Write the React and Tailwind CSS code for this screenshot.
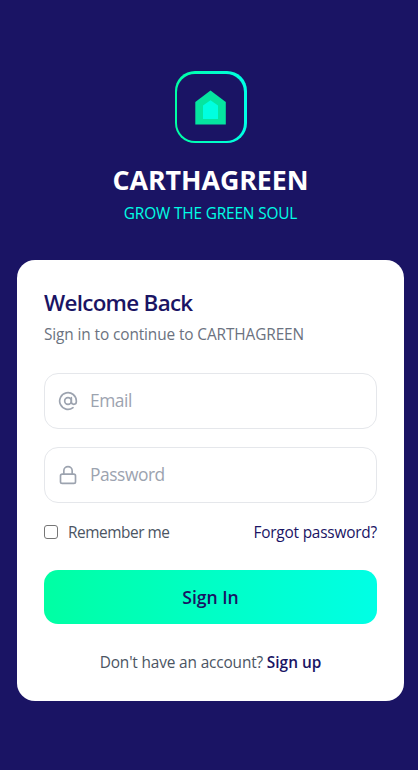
import { AtSign, Lock } from "lucide-react";

function Logo() {
  return (
    <div className="h-[72px] w-[72px] rounded-[20px] bg-linear-to-r from-[#00ffa3] to-[#00ffe5] pt-[3px] pr-[3px] pb-[2px] pl-[2px]">
      <div className="flex h-full w-full items-center justify-center rounded-[18px] bg-[#1a1464]">
        <svg width="67" height="67" viewBox="0 0 67 67">
          <path d="M33.5 16.6 48.8 28v22.6H18.3V28Z" fill="#05e5a0" />
          <path d="M33.5 26.2 41 31.6V45H26V31.6Z" fill="#00ffe0" />
        </svg>
      </div>
    </div>
  );
}

function Field({ icon: Icon, type, label }) {
  return (
    <label className="flex h-14 items-center gap-3 rounded-[14px] border border-[#e5e7eb] pl-[13px]">
      <Icon size={20} className="shrink-0 text-[#9ca3af]" />
      <input
        type={type}
        placeholder={label}
        className="min-w-0 flex-1 bg-transparent pb-px text-[17.4px] tracking-[-0.45px] outline-none placeholder:text-[#9ca3af]"
      />
    </label>
  );
}

export default function App() {
  return (
    <div className="flex min-h-[770px] flex-col items-center bg-[#1a1464] pt-[71px] pr-[14px] pl-[17px] font-['Open_Sans','Noto_Sans',sans-serif]">
      <Logo />
      <h1 className="mt-[19px] text-[26.8px] leading-9 font-bold tracking-[-0.08px] whitespace-nowrap text-white">CARTHAGREEN</h1>
      <p className="mt-[4px] text-[15.4px] leading-6 tracking-[-0.15px] whitespace-nowrap text-[#00ffe5]">GROW THE GREEN SOUL</p>
      <main className="mt-[34px] h-[441px] w-full rounded-[18px] bg-white px-[27px] pt-[27px]">
        <h2 className="text-[22.4px] leading-8 font-semibold tracking-[-0.7px] text-[#1a1464]">Welcome Back</h2>
        <p className="mt-[4px] text-[15.4px] leading-6 tracking-[-0.11px] text-[#6b7280]">Sign in to continue to CARTHAGREEN</p>
        <div className="mt-[26px] flex flex-col gap-[18px]">
          <Field icon={AtSign} type="email" label="Email" />
          <Field icon={Lock} type="password" label="Password" />
        </div>
        <div className="mt-[18px] flex h-6 items-center justify-between text-[15.4px] tracking-[-0.2px]">
          <label className="flex items-center tracking-[-0.45px] text-[#4b5563]">
            <input type="checkbox" className="mr-[10px] mb-[2px] h-[14px] w-[14px] appearance-none rounded-[3px] border border-[#767676] bg-white" />
            <span>Remember me</span>
          </label>
          <a href="#" className="text-[#1a1464]">Forgot password?</a>
        </div>
        <button className="mt-[25px] flex h-[54px] w-full items-center justify-center rounded-[14px] bg-linear-to-r from-[#00ffa3] to-[#00ffe5] text-[17.6px] font-semibold tracking-[-0.02px] text-[#1a1464]">
          Sign In
        </button>
        <p className="mt-[27px] text-center text-[15.4px] leading-6 tracking-[-0.15px] text-[#4b5563]">
          Don't have an account? <a href="#" className="font-semibold tracking-normal text-[#1a1464]">Sign up</a>
        </p>
      </main>
    </div>
  );
}
